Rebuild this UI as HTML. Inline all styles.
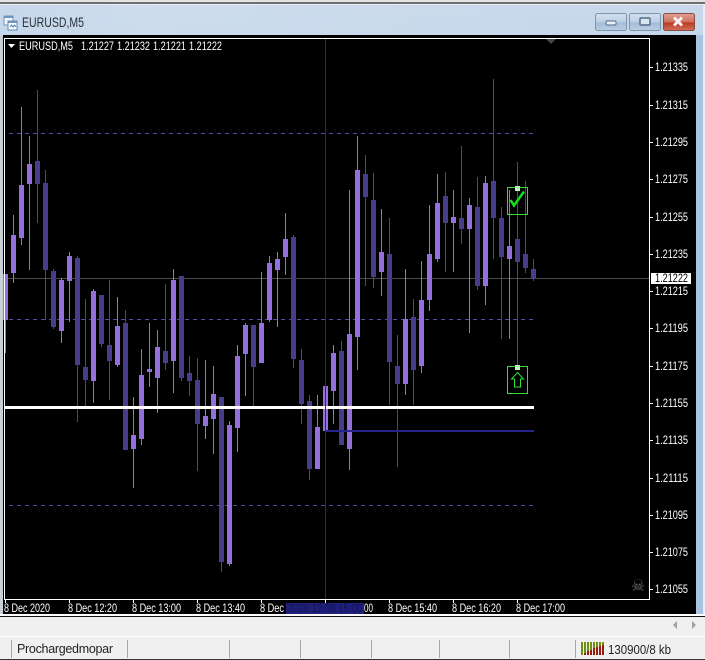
<!DOCTYPE html>
<html><head><meta charset="utf-8"><style>
html,body{margin:0;padding:0;width:705px;height:660px;overflow:hidden;background:#f0f0f0}
svg{display:block}
text{font-family:"Liberation Sans",sans-serif}
</style></head><body>
<svg width="705" height="660" viewBox="0 0 705 660" xmlns="http://www.w3.org/2000/svg">
<defs>
<linearGradient id="t" x1="0" y1="0" x2="0" y2="1"><stop offset="0" stop-color="#c6d8ea"/><stop offset="1" stop-color="#a9c4e0"/></linearGradient>
<linearGradient id="t2" x1="0" y1="0" x2="1" y2="0"><stop offset="0" stop-color="#fff" stop-opacity=".0"/><stop offset=".2" stop-color="#fff" stop-opacity=".12"/><stop offset="1" stop-color="#fff" stop-opacity="0"/></linearGradient>
<linearGradient id="b" x1="0" y1="0" x2="0" y2="1"><stop offset="0" stop-color="#d3e1ef"/><stop offset=".5" stop-color="#bcd0e4"/><stop offset=".55" stop-color="#a3bcd6"/><stop offset="1" stop-color="#b9cfe5"/></linearGradient>
<linearGradient id="c" x1="0" y1="0" x2="0" y2="1"><stop offset="0" stop-color="#e2a196"/><stop offset=".5" stop-color="#cf6f5c"/><stop offset=".55" stop-color="#b93a22"/><stop offset="1" stop-color="#d0705c"/></linearGradient>
</defs>
<!-- window chrome -->
<rect width="705" height="660" fill="#f0f0f0"/>
<rect y="0" width="705" height="2" fill="#e4e4e4"/>
<rect y="2" width="705" height="2" fill="#6e6e6e"/>
<rect y="4" width="705" height="1" fill="#e8eef4"/>
<rect y="5" width="705" height="610" fill="url(#t)"/>
<rect y="5" width="705" height="31" fill="url(#t2)"/>
<rect x="0" y="35" width="3" height="580" fill="#c9cfd6"/>
<rect x="3" y="35" width="693" height="579" fill="#000"/>
<rect x="696" y="35" width="7" height="580" fill="#a9c4e0"/>
<rect x="703" y="5" width="2" height="610" fill="#e9eef3"/>
<rect x="0" y="614" width="705" height="2" fill="#fff"/>
<rect x="0" y="616" width="705" height="1" fill="#111"/>
<rect x="0" y="617" width="705" height="19" fill="#f0f0f0"/>
<rect x="0" y="636" width="705" height="1" fill="#fff"/>
<rect x="0" y="637" width="705" height="22" fill="#f0f0f0"/>
<rect x="0" y="659" width="705" height="1" fill="#333"/>
<!-- title icon -->
<g shape-rendering="crispEdges">
<rect x="4" y="16" width="9" height="9" fill="#f4f8fc" stroke="#6d94bd"/>
<rect x="4" y="16" width="9" height="2" fill="#6d94bd"/>
<rect x="8" y="21" width="9" height="9" fill="#fff" stroke="#5f88b5"/>
<rect x="8" y="21" width="9" height="2" fill="#6d94bd"/>
</g>
<path d="M10 27l1.500-2 1.500 2 1.500-2 1.500 2" fill="none" stroke="#4f7fb0"/>
<text x="22" y="27" font-size="14" fill="#2a2f38" textLength="62" lengthAdjust="spacingAndGlyphs">EURUSD,M5</text>
<!-- buttons -->
<rect x="595.500" y="13.500" width="31" height="17" rx="2" fill="url(#b)" stroke="#7f95ac"/>
<rect x="606" y="21" width="10" height="4" rx="1" fill="#e8f0f7" stroke="#556d85"/>
<rect x="629.500" y="13.500" width="31" height="17" rx="2" fill="url(#b)" stroke="#7f95ac"/>
<rect x="640" y="18" width="10" height="7" rx="1" fill="#dbe6f0" stroke="#556d85" stroke-width="1.500"/>
<rect x="663.500" y="13.500" width="31" height="17" rx="2" fill="url(#c)" stroke="#8a4a40"/>
<path d="M674 17.500l8 8M682 17.500l-8 8" stroke="#f4f2f0" stroke-width="3"/>
<!-- grid levels and frame -->
<g shape-rendering="crispEdges">
<path d="M5 278.500H650" stroke="#4a4a4a" fill="none"/>
<path d="M9 133.500H534M9 319.500H534M9 505.500H534" stroke="#574aa8" stroke-dasharray="4 4" fill="none"/>
<!-- wicks -->
<path fill="none" stroke="#8d6fe6" d="M5.500 274V353M13.500 215V283M21.500 107V245M29.500 136V270M61.500 278V343M69.500 252V322M93.500 289V403M117.500 297V367M133.500 397V488M141.500 349V445M149.500 323V387M157.500 330V413M173.500 269V393M205.500 360V439M213.500 366V454M229.500 421V566M237.500 345V452M245.500 323V396M261.500 272V363M269.500 256V322M277.500 252V327M285.500 213V275M317.500 395V469M325.500 386V431M333.500 345V424M349.500 190V470M357.500 136V370M381.500 209V296M405.500 269V395M421.500 261V373M429.500 205V311M437.500 174V262M453.500 190V272M469.500 198V333M485.500 176V305M509.500 190V339"/>
<path fill="none" stroke="#4c40ac" d="M37.500 90V223M45.500 170V320M53.500 269V329M77.500 256V422M85.500 299V409M101.500 295V347M109.500 280V400M125.500 310V450M165.500 284V370M181.500 276V381M189.500 356V396M197.500 358V471M221.500 397V572M253.500 325V406M293.500 235V368M301.500 349V424M309.500 395V480M341.500 341V445M365.500 155V286M373.500 173V288M389.500 218V405M397.500 335V467M413.500 299V405M445.500 172V272M461.500 146V244M477.500 177V290M493.500 79V259M501.500 207V339M517.500 162V366M525.500 181V273M533.500 259V281"/>
<!-- bodies -->
<path fill="none" stroke="#9370db" stroke-width="5" d="M5.500 274V320M13.500 235V273M21.500 185V238M29.500 164V184M61.500 280V331M69.500 256V281M93.500 291V381M117.500 326V365M133.500 435V449M141.500 375V439M149.500 369V372M157.500 347V378M173.500 280V361M205.500 416V426M213.500 394V419M229.500 425V564M237.500 356V428M245.500 325V354M261.500 323V363M269.500 263V320M277.500 259V270M285.500 239V257M317.500 427V469M325.500 386V431M333.500 353V391M349.500 334V449M357.500 170V337M381.500 252V272M405.500 319V384M421.500 300V366M429.500 254V300M437.500 203V259M453.500 217V223M469.500 205V229M485.500 183V286M509.500 246V259"/>
<path fill="none" stroke="#483d8b" stroke-width="5" d="M37.500 161V184M45.500 183V270M53.500 271V327M77.500 258V365M85.500 367V380M101.500 295V344M109.500 345V361M125.500 323V450M165.500 351V363M181.500 276V378M189.500 373V381M197.500 380V424M221.500 397V562M253.500 325V367M293.500 237V359M301.500 360V404M309.500 401V469M341.500 351V445M365.500 174V197M373.500 200V277M389.500 254V362M397.500 366V384M413.500 317V370M445.500 196V223M461.500 218V229M477.500 207V286M493.500 181V218M501.500 218V257M517.500 239V262M525.500 254V268M533.500 269V279"/>
<!-- white line, crosshair -->
<rect x="5" y="406" width="529" height="3" fill="#fff"/>
<path d="M325.500 38V599" stroke="#24249a" fill="none"/>
<rect x="325" y="430" width="209" height="2" fill="#24248c"/>
<!-- frame -->
<rect x="4.500" y="38.500" width="645" height="561" fill="none" stroke="#fff"/>
<!-- price ticks -->
<path fill="none" stroke="#fff" d="M650 67.500h3M650 105.500h3M650 142.500h3M650 179.500h3M650 217.500h3M650 254.500h3M650 291.500h3M650 328.500h3M650 366.500h3M650 403.500h3M650 440.500h3M650 478.500h3M650 515.500h3M650 552.500h3M650 589.500h3"/>
<!-- time ticks -->
<path fill="none" stroke="#fff" d="M5.500 600v3M69.500 600v3M133.500 600v3M197.500 600v3M261.500 600v3M325.500 600v3M389.500 600v3M453.500 600v3M517.500 600v3"/>
<!-- markers -->
<rect x="507.500" y="187.500" width="20" height="27" fill="none" stroke="#2fe03a"/>
<rect x="507.500" y="366.500" width="20" height="27" fill="none" stroke="#2fe03a"/>
<rect x="515" y="186" width="5" height="5" fill="#b8f7b8"/>
<rect x="515" y="365" width="5" height="5" fill="#b8f7b8"/>
</g>
<path d="M510.500 200l3.500 5.500 10-14" fill="none" stroke="#12e21a" stroke-width="2.500"/>
<path d="M517.500 372.500l6 6.500h-3v8h-6v-8h-3z" fill="none" stroke="#2fe03a"/>
<path d="M546 39h10l-5 5z" fill="#444"/>
<path d="M8 44h7l-3.500 4z" fill="#fff"/>
<!-- header text -->
<text x="19" y="50" font-size="11.500" fill="#fff" textLength="54" lengthAdjust="spacingAndGlyphs">EURUSD,M5</text>
<text x="81" y="50" font-size="11.500" fill="#fff" textLength="33" lengthAdjust="spacingAndGlyphs">1.21227</text>
<text x="117" y="50" font-size="11.500" fill="#fff" textLength="33" lengthAdjust="spacingAndGlyphs">1.21232</text>
<text x="153" y="50" font-size="11.500" fill="#fff" textLength="33" lengthAdjust="spacingAndGlyphs">1.21221</text>
<text x="189" y="50" font-size="11.500" fill="#fff" textLength="33" lengthAdjust="spacingAndGlyphs">1.21222</text>
<!-- price labels -->
<g font-size="11.500" fill="#fff">
<text x="655" y="71" textLength="33" lengthAdjust="spacingAndGlyphs">1.21335</text>
<text x="655" y="109" textLength="33" lengthAdjust="spacingAndGlyphs">1.21315</text>
<text x="655" y="146" textLength="33" lengthAdjust="spacingAndGlyphs">1.21295</text>
<text x="655" y="183" textLength="33" lengthAdjust="spacingAndGlyphs">1.21275</text>
<text x="655" y="221" textLength="33" lengthAdjust="spacingAndGlyphs">1.21255</text>
<text x="655" y="258" textLength="33" lengthAdjust="spacingAndGlyphs">1.21235</text>
<text x="655" y="295" textLength="33" lengthAdjust="spacingAndGlyphs">1.21215</text>
<text x="655" y="332" textLength="33" lengthAdjust="spacingAndGlyphs">1.21195</text>
<text x="655" y="370" textLength="33" lengthAdjust="spacingAndGlyphs">1.21175</text>
<text x="655" y="407" textLength="33" lengthAdjust="spacingAndGlyphs">1.21155</text>
<text x="655" y="444" textLength="33" lengthAdjust="spacingAndGlyphs">1.21135</text>
<text x="655" y="482" textLength="33" lengthAdjust="spacingAndGlyphs">1.21115</text>
<text x="655" y="519" textLength="33" lengthAdjust="spacingAndGlyphs">1.21095</text>
<text x="655" y="556" textLength="33" lengthAdjust="spacingAndGlyphs">1.21075</text>
<text x="655" y="593" textLength="33" lengthAdjust="spacingAndGlyphs">1.21055</text>
</g>
<rect x="651" y="273" width="40" height="11" fill="#fff"/>
<text x="655" y="282" font-size="11.500" fill="#000" textLength="33" lengthAdjust="spacingAndGlyphs">1.21222</text>
<!-- time labels -->
<g font-size="11.500" fill="#fff">
<text x="4" y="612" textLength="46" lengthAdjust="spacingAndGlyphs">8 Dec 2020</text>
<text x="68" y="612" textLength="49" lengthAdjust="spacingAndGlyphs">8 Dec 12:20</text>
<text x="132" y="612" textLength="49" lengthAdjust="spacingAndGlyphs">8 Dec 13:00</text>
<text x="196" y="612" textLength="49" lengthAdjust="spacingAndGlyphs">8 Dec 13:40</text>
<text x="260" y="612" textLength="24" lengthAdjust="spacingAndGlyphs">8 Dec</text>
<text x="364" y="612" textLength="9" lengthAdjust="spacingAndGlyphs">00</text>
<text x="388" y="612" textLength="49" lengthAdjust="spacingAndGlyphs">8 Dec 15:40</text>
<text x="452" y="612" textLength="49" lengthAdjust="spacingAndGlyphs">8 Dec 16:20</text>
<text x="516" y="612" textLength="49" lengthAdjust="spacingAndGlyphs">8 Dec 17:00</text>
</g>
<rect x="286" y="603" width="78" height="11" fill="#1f1f80"/>
<text x="288" y="612" font-size="11.500" fill="#15154a" textLength="74" lengthAdjust="spacingAndGlyphs">2020.12.08 15:00</text>
<!-- skull -->
<text x="638" y="591" font-size="16" fill="#6a6a6a" text-anchor="middle" style="font-family:'DejaVu Sans',sans-serif">☠</text>
<!-- scroll arrows -->
<path d="M673 625l4-4v8z" fill="#a0a0a0"/>
<path d="M692 621l4 4-4 4z" fill="#a0a0a0"/>
<!-- status separators -->
<g shape-rendering="crispEdges" stroke="#a8a8a8" fill="none">
<path d="M11.500 640V658M127.500 640V658M229.500 640V658M300.500 640V658M371.500 640V658M439.500 640V658M509.500 640V658M575.500 640V658"/>
</g>
<text x="17" y="653" font-size="12.500" fill="#222" textLength="96" lengthAdjust="spacing">Prochargedmopar</text>
<!-- connection icon -->
<g shape-rendering="crispEdges">
<rect x="581" y="642" width="23" height="13" fill="#f0f0f0"/>
<path fill="none" stroke="#6f8f12" stroke-width="2" d="M582 642V655M585 642V653M588 642V651M591 642V650M594 642V648M597 642V647M600 642V646M603 642V645"/>
<path fill="none" stroke="#9a1a10" stroke-width="2" d="M585 653V655M588 651V655M591 650V655M594 648V655M597 647V655M600 646V655M603 645V655"/>
</g>
<text x="608" y="654" font-size="13" fill="#222" textLength="63" lengthAdjust="spacingAndGlyphs">130900/8 kb</text>
</svg>
</body></html>
